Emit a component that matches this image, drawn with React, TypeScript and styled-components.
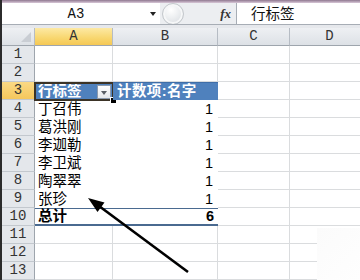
import React from "react";
import styled, { createGlobalStyle, css } from "styled-components";

const GlobalStyle = createGlobalStyle`
  html, body {
    margin: 0;
    padding: 0;
    background: #ffffff;
  }
  body {
    width: 360px;
    height: 280px;
    overflow: hidden;
  }
`;

// Liberation Sans first keeps the line box compact; CJK glyphs fall back to Noto.
const CJK = `"Liberation Sans", "Noto Sans CJK SC", sans-serif`;
const HEAD_FONT = `"Liberation Mono", "DejaVu Sans Mono", monospace`;

type Kind = "plain" | "pivotHead" | "pivot" | "total";

interface Row {
  a?: string;
  b?: string;
  kind: Kind;
}

const rows: Row[] = [
  { kind: "plain" },
  { kind: "plain" },
  { a: "行标签", b: "计数项:名字", kind: "pivotHead" },
  { a: "丁召伟", b: "1", kind: "pivot" },
  { a: "葛洪刚", b: "1", kind: "pivot" },
  { a: "李迦勒", b: "1", kind: "pivot" },
  { a: "李卫斌", b: "1", kind: "pivot" },
  { a: "陶翠翠", b: "1", kind: "pivot" },
  { a: "张珍", b: "1", kind: "pivot" },
  { a: "总计", b: "6", kind: "total" },
  { kind: "plain" },
  { kind: "plain" },
  { kind: "plain" },
];

const columns = ["A", "B", "C", "D"];

const App = () => {
  return (
    <>
      <GlobalStyle />
      <Window>
        <TitleBand />
        <FormulaBar>
          <NameBox>
            <NameText>A3</NameText>
            <Caret />
          </NameBox>
          <FxArea>
            <RoundButton />
            <FxLabel>fx</FxLabel>
          </FxArea>
          <FormulaInput>行标签</FormulaInput>
        </FormulaBar>
        <BarGap />
        <Sheet>
          <Corner />
          {columns.map((c) => (
            <ColHead key={c} $active={c === "A"}>
              {c}
            </ColHead>
          ))}
          {rows.map((r, i) => (
            <React.Fragment key={i}>
              <RowHead $active={i === 2}>{i + 1}</RowHead>
              <Cell $kind={r.kind}>
                {r.a && <CellText>{r.a}</CellText>}
                {r.kind === "pivotHead" && (
                  <>
                    <FilterButton />
                    <Selection>
                      <FillHandle />
                    </Selection>
                  </>
                )}
              </Cell>
              <Cell $kind={r.kind} $right={r.kind !== "pivotHead"}>
                {r.b && <CellText $spaced={r.kind === "pivotHead"}>{r.b}</CellText>}
              </Cell>
              <Cell $kind="plain" />
              <Cell $kind="plain" />
            </React.Fragment>
          ))}
        </Sheet>
        <Fade />
        <ArrowLayer width="360" height="280" viewBox="0 0 360 280">
          <line x1="188" y1="272" x2="99" y2="206" stroke="#000" strokeWidth="2.6" />
          <polygon points="88,198 104.5,202.5 97.5,212" fill="#000" />
        </ArrowLayer>
      </Window>
    </>
  );
};

const Window = styled.div`
  position: relative;
  width: 360px;
  height: 280px;
  overflow: hidden;
  box-sizing: border-box;
  border-left: 2px solid #2b2b2b;
  background: #ffffff;
  display: flex;
  flex-direction: column;
`;

const TitleBand = styled.div`
  height: 3px;
  flex: 0 0 3px;
  background: linear-gradient(#8f7890, #d9c8d8);
`;

const FormulaBar = styled.div`
  display: flex;
  height: 21px;
  flex: 0 0 21px;
  border-bottom: 1px solid #a7adb5;
  background: #ffffff;
`;

const NameBox = styled.div`
  width: 158px;
  display: flex;
  align-items: center;
  background: #ffffff;
`;

const NameText = styled.span`
  flex: 1;
  text-align: center;
  font-family: ${HEAD_FONT};
  font-size: 14px;
  line-height: 16px;
  color: #111;
`;

const Caret = styled.span`
  width: 0;
  height: 0;
  margin-right: 4px;
  border-left: 3.5px solid transparent;
  border-right: 3.5px solid transparent;
  border-top: 4px solid #222;
`;

const FxArea = styled.div`
  width: 76px;
  display: flex;
  align-items: center;
  background: #eceef1;
  border-right: 1px solid #a7adb5;
  overflow: hidden;
`;

const RoundButton = styled.div`
  width: 22px;
  height: 22px;
  margin-left: 2px;
  border-radius: 50%;
  border: 1px solid #c4c8cc;
  box-sizing: border-box;
  background: radial-gradient(circle at 40% 30%, #ffffff 0%, #eef0f2 40%, #d3d7dc 100%);
  box-shadow: inset 0 0 0 2px #f6f7f8;
`;

const FxLabel = styled.span`
  margin-left: auto;
  margin-right: 5px;
  font-family: "Liberation Serif", serif;
  font-style: italic;
  font-weight: bold;
  font-size: 13px;
  line-height: 14px;
  color: #333;
`;

const FormulaInput = styled.div`
  flex: 1;
  display: flex;
  align-items: center;
  padding-left: 14px;
  font-family: ${CJK};
  font-size: 14.5px;
  line-height: 16px;
  color: #111;
`;

const BarGap = styled.div`
  height: 3px;
  flex: 0 0 3px;
  background: #e6e8ec;
`;

const Sheet = styled.div`
  display: grid;
  grid-template-columns: 33px 78px 105px 72px 80px;
  grid-auto-rows: 18px;
`;

const headBase = css`
  box-sizing: border-box;
  display: flex;
  align-items: center;
  justify-content: center;
  font-family: ${HEAD_FONT};
  font-size: 14px;
  line-height: 15px;
  color: #333;
`;

const Corner = styled.div`
  ${headBase};
  position: relative;
  background: linear-gradient(#eef0f3, #dde1e6);
  border-right: 1px solid #b6bcc4;
  border-bottom: 1px solid #9ea5ad;
  &::after {
    content: "";
    position: absolute;
    right: 3px;
    bottom: 3px;
    border-left: 10px solid transparent;
    border-bottom: 10px solid #c9cdd3;
  }
`;

const ColHead = styled.div<{ $active?: boolean }>`
  ${headBase};
  border-right: 1px solid #b6bcc4;
  border-bottom: 1px solid #9ea5ad;
  background: ${(p) =>
    p.$active
      ? "linear-gradient(#fde9a4, #f8d66e 60%, #f5c855)"
      : "linear-gradient(#eef0f3, #dde1e6)"};
`;

const RowHead = styled.div<{ $active?: boolean }>`
  ${headBase};
  border-right: 1px solid #9ea5ad;
  border-bottom: 1px solid #c3c8ce;
  background: ${(p) =>
    p.$active ? "linear-gradient(#fad985, #f5c75c)" : "#e4e7eb"};
`;

const Cell = styled.div<{ $kind: Kind; $right?: boolean }>`
  position: relative;
  box-sizing: border-box;
  display: flex;
  align-items: center;
  justify-content: ${(p) => (p.$right ? "flex-end" : "flex-start")};
  padding: 0 4px 0 3px;
  font-family: ${CJK};
  font-size: 14.5px;
  white-space: nowrap;
  color: #000;
  ${(p) => {
    switch (p.$kind) {
      case "pivotHead":
        return css`
          background: #4f81bd;
          color: #ffffff;
          font-weight: bold;
          border-top: 1px solid #3f6ea8;
        `;
      case "pivot":
        return css`
          border-right: 1px solid transparent;
        `;
      case "total":
        return css`
          font-weight: bold;
          border-top: 1px solid #4a6a90;
          border-bottom: 2px solid #4a6a90;
        `;
      default:
        return css`
          border-right: 1px solid #dadcde;
          border-bottom: 1px solid #dadcde;
        `;
    }
  }}
`;

const CellText = styled.span<{ $spaced?: boolean }>`
  line-height: 15px;
  letter-spacing: ${(p) => (p.$spaced ? "0.4px" : "0")};
  margin-left: ${(p) => (p.$spaced ? "1px" : "0")};
`;

const FilterButton = styled.span`
  position: absolute;
  right: 2px;
  top: 2px;
  width: 14px;
  height: 14px;
  box-sizing: border-box;
  border: 1px solid #8b9aae;
  background: linear-gradient(#ffffff, #e3e6ea);
  &::after {
    content: "";
    position: absolute;
    left: 3px;
    top: 5px;
    border-left: 3.5px solid transparent;
    border-right: 3.5px solid transparent;
    border-top: 4px solid #5a5f66;
  }
`;

const Selection = styled.span`
  position: absolute;
  left: -1px;
  top: -1px;
  right: -1px;
  bottom: -1px;
  border: 2px solid #3b3326;
  pointer-events: none;
`;

const FillHandle = styled.span`
  position: absolute;
  right: -5px;
  bottom: -5px;
  width: 5px;
  height: 5px;
  background: #000;
  border: 1px solid #fff;
`;

const Fade = styled.div`
  position: absolute;
  right: 0;
  bottom: 0;
  width: 43px;
  height: 52px;
  background: linear-gradient(135deg, #fbfbfb, #fefefe);
`;

const ArrowLayer = styled.svg`
  position: absolute;
  left: -2px;
  top: 0;
  pointer-events: none;
`;

export default App;
